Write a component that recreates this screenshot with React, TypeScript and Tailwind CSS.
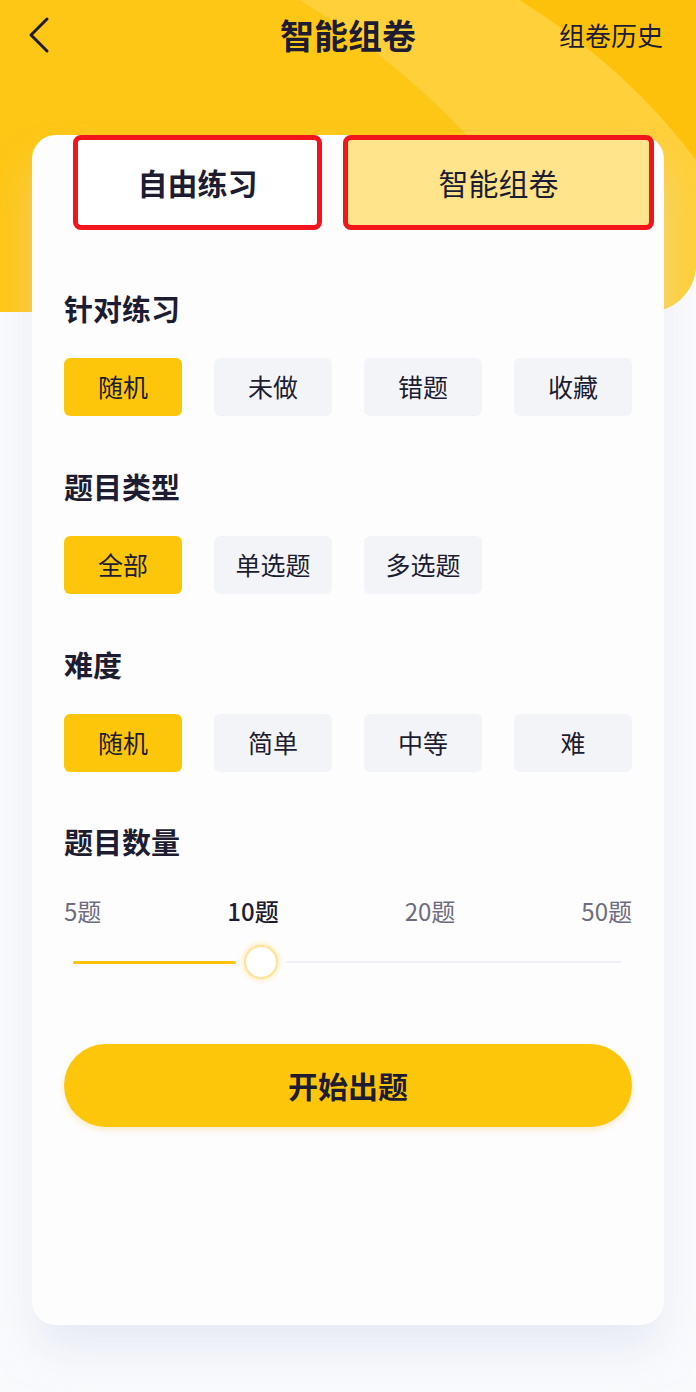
import React, { useState } from 'react'

const FONT = "font-['Noto_Sans_CJK_SC','Noto_Sans',sans-serif]"

const groups = [
  { title: '针对练习', options: ['随机', '未做', '错题', '收藏'] },
  { title: '题目类型', options: ['全部', '单选题', '多选题'] },
  { title: '难度', options: ['随机', '简单', '中等', '难'] },
]

const counts = ['5题', '10题', '20题', '50题']

function OptionRow({ options }: { options: string[] }) {
  const [active, setActive] = useState(0)
  return (
    <div className="grid grid-cols-4 gap-[32px]">
      {options.map((o, i) => (
        <button
          key={o}
          onClick={() => setActive(i)}
          className={`h-[58px] rounded-[6px] text-[25px] text-[#1d1c30] ${
            i === active ? 'bg-[#fec60b]' : 'bg-[#f3f4f8]'
          }`}
        >
          {o}
        </button>
      ))}
    </div>
  )
}

export default function App() {
  return (
    <div className={`relative w-[696px] min-h-[1392px] overflow-hidden bg-[#f9fafc] ${FONT}`}>
      {/* yellow header backdrop */}
      <div className="absolute left-0 top-0 h-[312px] w-full overflow-hidden rounded-br-[48px] bg-[#fec716]">
        <svg width="696" height="312" viewBox="0 0 696 312" className="block">
          <path d="M300 0 L520 0 Q630 70 696 160 L696 312 L600 312 Q480 110 300 0 Z" fill="#ffd03a" />
          <path d="M520 0 L696 0 L696 160 Q630 70 520 0 Z" fill="#fec10b" />
          <path d="M600 312 L696 312 L696 160 L696 312 Z" fill="#fec10b" />
        </svg>
      </div>

      {/* top bar */}
      <div className="relative grid h-[70px] grid-cols-[1fr_auto_1fr] items-center">
        <div className="pl-[27px]">
          <svg width="24" height="38" viewBox="0 0 24 38" fill="none">
            <polyline points="20,3 4,19 20,35" stroke="#1d1c30" strokeWidth="3" strokeLinecap="round" strokeLinejoin="round" />
          </svg>
        </div>
        <div className="text-[34px] font-bold leading-[44px] text-[#1d1c30]">智能组卷</div>
        <div className="pr-[33px] text-right text-[26px] leading-[36px] text-[#1d1c30]">组卷历史</div>
      </div>

      {/* main card */}
      <div className="relative mx-[32px] mt-[70px] h-[1190px] rounded-[24px] bg-[#fdfdfe] shadow-[0_28px_40px_-6px_rgba(215,220,236,0.55)]">
        <div className="-mt-[5px] flex gap-[21px] pl-[41px] pr-[10px]">
          <div className="flex h-[95px] w-[249px] items-center justify-center rounded-[8px] border-[5px] border-[#f2151c] bg-white text-[30px] font-bold text-[#1d1c30]">
            自由练习
          </div>
          <div className="flex h-[95px] flex-1 items-center justify-center rounded-[8px] border-[5px] border-[#f2151c] bg-[#ffe48b] text-[30px] text-[#1d1c30]">
            智能组卷
          </div>
        </div>

        <div className="px-[32px]">
          {groups.map((g, idx) => (
            <div key={g.title} className={idx === 0 ? 'mt-[58px]' : 'mt-[50px]'}>
              <h2 className="text-[29px] font-bold leading-[40px] text-[#1d1c30]">{g.title}</h2>
              <div className="mt-[30px]">
                <OptionRow options={g.options} />
              </div>
            </div>
          ))}

          <h2 className="mt-[49px] text-[29px] font-bold leading-[40px] text-[#1d1c30]">题目数量</h2>

          <div className="mt-[34px] flex justify-between text-[24px] leading-[32px] text-[#6e6c80]">
            {counts.map((c, i) => (
              <span key={c} className={i === 1 ? 'font-medium text-[#1d1c30]' : ''}>
                {c}
              </span>
            ))}
          </div>

          <div className="ml-[9px] mr-[10px] mt-[18px] flex items-center gap-[8px]">
            <div className="h-[3px] w-[163px] rounded-full bg-[#fdc20b]" />
            <div className="h-[34px] w-[34px] rounded-full border-2 border-[#ffe399] bg-white shadow-[0_0_6px_rgba(254,198,11,0.45)]" />
            <div className="h-[2px] flex-1 rounded-full bg-[#eef0f5]" />
          </div>

          <button className="mt-[65px] flex h-[83px] w-full items-center justify-center rounded-full bg-[#fec60b] text-[30px] font-bold text-[#1d1c30] shadow-[0_3px_6px_rgba(230,170,0,0.22)]">
            开始出题
          </button>
        </div>
      </div>
    </div>
  )
}
